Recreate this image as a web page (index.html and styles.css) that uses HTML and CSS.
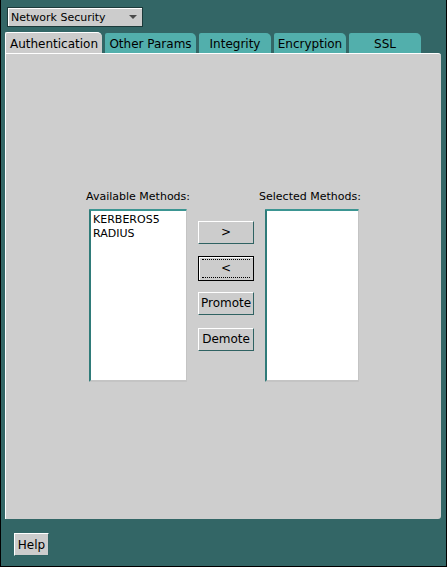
FILE: index.html
```html
<!DOCTYPE html>
<html>
<head>
<meta charset="utf-8">
<link rel="stylesheet" href="styles.css">
</head>
<body>
<div class="frame">
  <div class="topbar">
    <div class="combo">
      <span class="combo-text">Network Security</span>
      <span class="combo-arrow"></span>
    </div>
  </div>
  <div class="tabs">
    <div class="tab tab-active">Authentication</div>
    <div class="tab tab-w91">Other Params</div>
    <div class="tab tab-w72">Integrity</div>
    <div class="tab tab-w72">Encryption</div>
    <div class="tab tab-w72">SSL</div>
  </div>
  <div class="panel">
    <div class="methods">
      <div class="col col-avail">
        <div class="label">Available Methods:</div>
        <div class="list">
          <div class="item">KERBEROS5</div>
          <div class="item">RADIUS</div>
        </div>
      </div>
      <div class="buttons">
        <div class="btn btn-add">&gt;</div>
        <div class="btn btn-remove btn-focus"><span class="focus-ring">&lt;</span></div>
        <div class="btn btn-promote">Promote</div>
        <div class="btn btn-demote">Demote</div>
      </div>
      <div class="col col-sel">
        <div class="label">Selected Methods:</div>
        <div class="list list-sel"></div>
      </div>
    </div>
  </div>
  <div class="footer">
    <div class="btn btn-help">Help</div>
  </div>
</div>
</body>
</html>
```
FILE: styles.css
```css
html, body {
  margin: 0;
  padding: 0;
}
body {
  font-family: "DejaVu Sans", "Liberation Sans", sans-serif;
  font-size: 11px;
  color: #000;
}
.frame {
  width: 447px;
  height: 567px;
  box-sizing: border-box;
  background: #336666;
  border-left: 1px solid #000;
  border-right: 1px solid #000;
  border-bottom: 1px solid #000;
  display: flex;
  flex-direction: column;
}
.topbar {
  padding: 7px 0 0 6px;
  height: 20px;
}
.combo {
  width: 136px;
  height: 20px;
  box-sizing: border-box;
  background: #cccccc;
  border: 1px solid #1c3a3a;
  box-shadow: inset 1px 1px 0 #ffffff;
  display: flex;
  align-items: center;
  justify-content: space-between;
  padding: 0 5px 0 3px;
}
.combo-arrow {
  width: 0;
  height: 0;
  border-left: 4px solid transparent;
  border-right: 4px solid transparent;
  border-top: 4px solid #4a4a4a;
}
.tabs {
  margin-top: 5px;
  padding-left: 4px;
  display: flex;
  align-items: flex-end;
  gap: 3px;
  height: 21px;
}
.tab {
  height: 20px;
  box-sizing: border-box;
  background: #52afac;
  border-top-right-radius: 5px;
  border-top-left-radius: 2px;
  display: flex;
  align-items: center;
  justify-content: center;
  font-size: 12px;
  padding-top: 1px;
}
.tab-active {
  width: 97px;
  height: 21px;
  background: #cccccc;
  border-left: 1px solid #ffffff;
  border-top: 1px solid #ffffff;
}
.tab-w91 { width: 91px; }
.tab-w72 { width: 72px; }
.panel {
  margin: 0 5px 0 4px;
  height: 466px;
  box-sizing: border-box;
  background: #cecece;
  border-left: 1px solid #ffffff;
  border-top: 1px solid #ffffff;
  border-top-right-radius: 3px;
  border-bottom-right-radius: 3px;
  display: flex;
  align-items: center;
  justify-content: center;
  padding-bottom: 2px;
}
.methods {
  display: flex;
  align-items: flex-start;
}
.col {
  display: flex;
  flex-direction: column;
  align-items: center;
}
.col-sel {
  align-items: flex-start;
}
.label {
  height: 14px;
  line-height: 14px;
  margin-bottom: 5px;
  font-size: 11px;
}
.list {
  width: 98px;
  height: 173px;
  box-sizing: border-box;
  background: #ffffff;
  border-left: 2px solid #2f7b79;
  border-top: 2px solid #3b9592;
  border-right: 1px solid #c4c4c4;
  border-bottom: 2px solid #c4c4c4;
  border-radius: 1px;
  padding: 2px 1px;
}
.list-sel {
  width: 94px;
  margin-left: 6px;
}
.item {
  font-size: 11px;
  line-height: 14px;
  height: 14px;
  padding-left: 1px;
}
.buttons {
  margin: 31px 5px 0 8px;
  display: flex;
  flex-direction: column;
}
.btn {
  width: 56px;
  height: 23px;
  box-sizing: border-box;
  background: #cccccc;
  border-left: 1px solid #ffffff;
  border-top: 1px solid #ffffff;
  border-right: 1px solid #2f6262;
  border-bottom: 1px solid #2f6262;
  display: flex;
  align-items: center;
  justify-content: center;
  font-size: 12px;
}
.btn-remove { margin-top: 12px; }
.btn-promote { margin-top: 11px; }
.btn-demote { margin-top: 13px; }
.btn-focus {
  height: 25px;
  border: 1px solid #000000;
  box-shadow: inset 1px 1px 0 #ffffff;
  padding: 2px 3px;
}
.focus-ring {
  flex: 1;
  height: 100%;
  box-sizing: border-box;
  border-top: 1px dotted #000;
  border-bottom: 1px dotted #000;
  display: flex;
  align-items: center;
  justify-content: center;
}
.footer {
  padding: 14px 0 0 13px;
}
.btn-help {
  width: 35px;
  height: 23px;
}
```
